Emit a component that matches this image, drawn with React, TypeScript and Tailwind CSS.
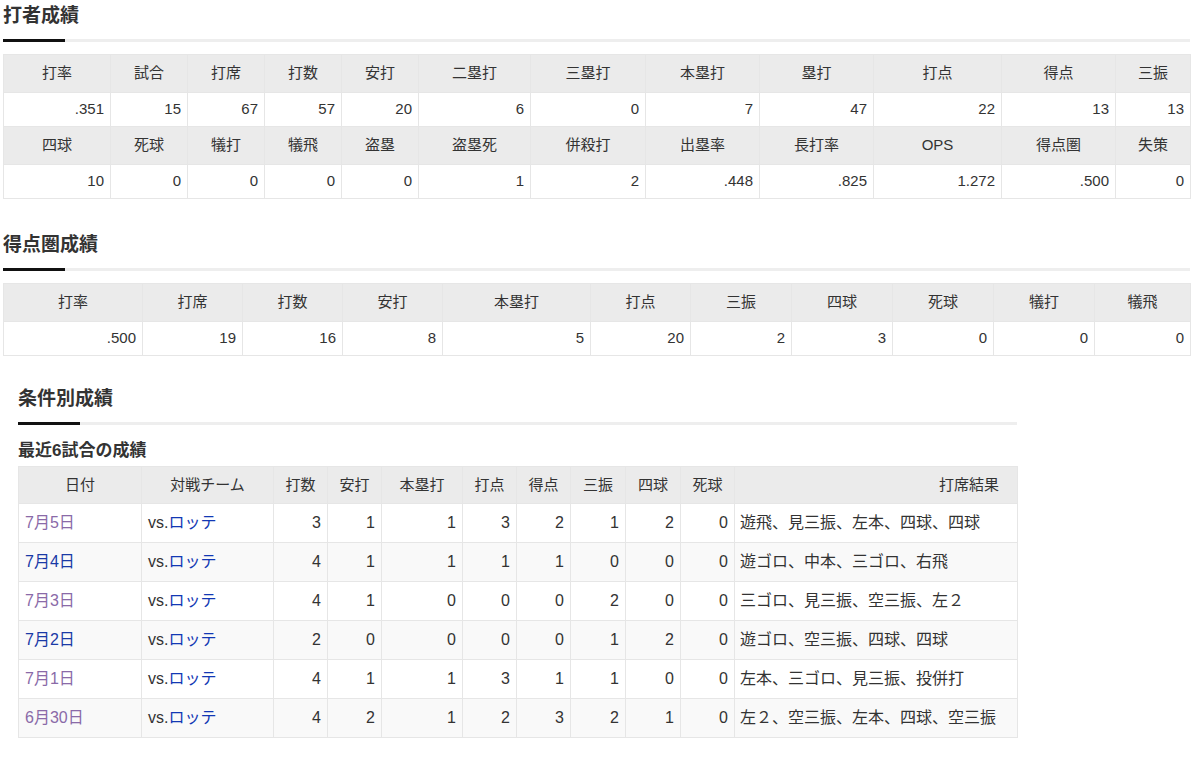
const font = { fontFamily: '"Liberation Sans", "Noto Sans CJK JP", sans-serif' };

type Cell = string;

const batting1Head = ["打率", "試合", "打席", "打数", "安打", "二塁打", "三塁打", "本塁打", "塁打", "打点", "得点", "三振"];
const batting1Data = [".351", "15", "67", "57", "20", "6", "0", "7", "47", "22", "13", "13"];
const batting2Head = ["四球", "死球", "犠打", "犠飛", "盗塁", "盗塁死", "併殺打", "出塁率", "長打率", "OPS", "得点圏", "失策"];
const batting2Data = ["10", "0", "0", "0", "0", "1", "2", ".448", ".825", "1.272", ".500", "0"];
const batting1Cols = [107, 77, 77, 77, 77, 112, 115, 114, 114, 128, 114, 75];

const risHead = ["打率", "打席", "打数", "安打", "本塁打", "打点", "三振", "四球", "死球", "犠打", "犠飛"];
const risData = [".500", "19", "16", "8", "5", "20", "2", "3", "0", "0", "0"];
const risCols = [139, 100, 100, 100, 148, 100, 101, 101, 101, 101, 96];

const recentCols = [123, 132, 54, 54, 81, 54, 54, 55, 55, 54, 283];
const recentHead = ["日付", "対戦チーム", "打数", "安打", "本塁打", "打点", "得点", "三振", "四球", "死球"];

const games = [
  { date: "7月5日", visited: true, nums: ["3", "1", "1", "3", "2", "1", "2", "0"], result: "遊飛、見三振、左本、四球、四球" },
  { date: "7月4日", visited: false, nums: ["4", "1", "1", "1", "1", "0", "0", "0"], result: "遊ゴロ、中本、三ゴロ、右飛" },
  { date: "7月3日", visited: true, nums: ["4", "1", "0", "0", "0", "2", "0", "0"], result: "三ゴロ、見三振、空三振、左２" },
  { date: "7月2日", visited: false, nums: ["2", "0", "0", "0", "0", "1", "2", "0"], result: "遊ゴロ、空三振、四球、四球" },
  { date: "7月1日", visited: true, nums: ["4", "1", "1", "3", "1", "1", "0", "0"], result: "左本、三ゴロ、見三振、投併打" },
  { date: "6月30日", visited: true, nums: ["4", "2", "1", "2", "3", "2", "1", "0"], result: "左２、空三振、左本、四球、空三振" },
];

function SectionTitle({ children }: { children: string }) {
  return (
    <div>
      <h2 className="text-[19px] font-bold leading-[24px] text-[#333]">{children}</h2>
      <div className="mt-[11px] flex h-[3px]">
        <div className="w-[62px] bg-[#111]" />
        <div className="flex-1 bg-[#eeeeee]" />
      </div>
    </div>
  );
}

function StatTable({ cols, rows }: { cols: number[]; rows: { head: Cell[]; data: Cell[] }[] }) {
  return (
    <table className="w-full table-fixed border-collapse border border-[#dedede] text-[15px] text-[#333]">
      <colgroup>
        {cols.map((w, i) => (
          <col key={i} style={{ width: w }} />
        ))}
      </colgroup>
      <tbody>
        {rows.map((r, ri) => (
          <>
            <tr key={`h${ri}`} className="h-[38px] bg-[#ebebeb]">
              {r.head.map((h, i) => (
                <th key={i} className="border border-[#e6e6e6] px-[6px] text-center font-normal">
                  {h}
                </th>
              ))}
            </tr>
            <tr key={`d${ri}`} className="h-[34px] bg-white">
              {r.data.map((d, i) => (
                <td key={i} className="border border-[#e6e6e6] px-[6px] text-right">
                  {d}
                </td>
              ))}
            </tr>
          </>
        ))}
      </tbody>
    </table>
  );
}

function RecentTable() {
  return (
    <table className="w-full table-fixed border-collapse border border-[#dedede] text-[16px] text-[#333]">
      <colgroup>
        {recentCols.map((w, i) => (
          <col key={i} style={{ width: w }} />
        ))}
      </colgroup>
      <thead>
        <tr className="h-[37px] bg-[#ebebeb] text-[15px]">
          {recentHead.map((h, i) => (
            <th key={i} className="border border-[#e6e6e6] px-[6px] text-center font-normal">
              {h}
            </th>
          ))}
          <th className="border border-[#e6e6e6] pr-[18px] text-right font-normal">打席結果</th>
        </tr>
      </thead>
      <tbody>
        {games.map((g, ri) => (
          <tr key={g.date} className={ri % 2 === 1 ? "h-[39px] bg-[#f9f9f9]" : "h-[39px] bg-white"}>
            <td className={`border border-[#e6e6e6] px-[6px] text-left ${g.visited ? "text-[#8a6aa8]" : "text-[#1a3aa6]"}`}>
              {g.date}
            </td>
            <td className="border border-[#e6e6e6] px-[6px] text-left">
              vs.<span className="text-[#1238b4]">ロッテ</span>
            </td>
            {g.nums.map((n, i) => (
              <td key={i} className="border border-[#e6e6e6] px-[6px] text-right">
                {n}
              </td>
            ))}
            <td className="border border-[#e6e6e6] px-[5px] text-left whitespace-nowrap">{g.result}</td>
          </tr>
        ))}
      </tbody>
    </table>
  );
}

export default function App() {
  return (
    <div className="min-h-[760px] w-[1202px] bg-white" style={font}>
      <div className="w-[1190px] pl-[3px] pt-[4px]">
        <SectionTitle>打者成績</SectionTitle>
        <div className="mt-[12px]">
          <StatTable
            cols={batting1Cols}
            rows={[
              { head: batting1Head, data: batting1Data },
              { head: batting2Head, data: batting2Data },
            ]}
          />
        </div>

        <div className="mt-[34px]">
          <SectionTitle>得点圏成績</SectionTitle>
        </div>
        <div className="mt-[12px]">
          <StatTable cols={risCols} rows={[{ head: risHead, data: risData }]} />
        </div>
      </div>

      <div className="ml-[18px] mt-[31px] w-[999px]">
        <SectionTitle>条件別成績</SectionTitle>
        <h3 className="mt-[15px] text-[17px] font-bold leading-[22px] text-[#333]">最近6試合の成績</h3>
        <div className="mt-[4px]">
          <RecentTable />
        </div>
      </div>
    </div>
  );
}
